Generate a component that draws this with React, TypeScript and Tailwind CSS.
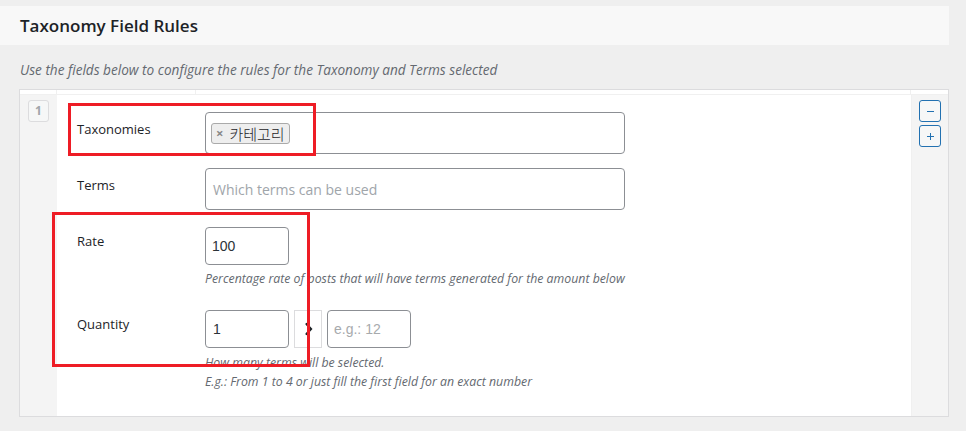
import React from "react";

const font = { fontFamily: '"Open Sans", "Noto Sans CJK KR", sans-serif' };

function Label({ children, pt }: { children: React.ReactNode; pt: string }) {
  return (
    <div className={`w-[128px] shrink-0 ${pt} text-[13px] leading-[18px] text-[#1d2327]`}>
      {children}
    </div>
  );
}

export default function App() {
  return (
    <div
      className="relative w-[966px] h-[431px] bg-[#efefef] overflow-hidden pt-[6px]"
      style={font}
    >
      {/* Header bar */}
      <div className="w-[949px] h-[39px] bg-[#f8f8f8] flex items-center pl-[20px]">
        <h2 className="text-[17px] font-semibold text-[#1d2327] leading-none">
          Taxonomy Field Rules
        </h2>
      </div>

      <p className="ml-[20px] mt-[16px] text-[13.6px] italic text-[#646970] leading-[18px]">
        Use the fields below to configure the rules for the Taxonomy and Terms selected
      </p>

      {/* Table */}
      <div className="ml-[19px] mt-[10px] w-[930px] h-[328px] border border-[#dcdcde] bg-white flex flex-col">
        {/* thin header row */}
        <div className="flex h-[5px] border-b border-[#f0f0f0]">
          <div className="w-[37px] border-r border-[#f0f0f0]" />
          <div className="w-[139px] border-r border-[#f0f0f0]" />
          <div className="flex-1 border-r border-[#f0f0f0]" />
          <div className="w-[37px]" />
        </div>
        <div className="flex flex-1">
          {/* order col */}
          <div className="w-[37px] bg-[#f4f4f4] flex justify-center pt-[5px]">
            <div className="w-[21px] h-[22px] border border-[#dcdcde] rounded-[3px] bg-[#f6f7f7] flex items-center justify-center text-[12px] font-bold text-[#a0a5aa]">
              1
            </div>
          </div>

          {/* main */}
          <div className="flex-1 pl-[20px] pt-[17px] flex flex-col">
            {/* Taxonomies */}
            <div className="flex">
              <Label pt="pt-[8px]">Taxonomies</Label>
              <div className="w-[420px] h-[42px] border border-[#8c8f94] rounded-[4px] flex items-center pl-[5px]">
                <span className="h-[21px] flex items-center gap-[6px] pl-[4px] pr-[4px] border border-[#aaaaaa] rounded-[3px] bg-[#eeeeee] text-[#1d2327]">
                  <span className="text-[#888] text-[13px] font-bold leading-none">×</span>
                  <span
                    className="leading-none text-[15px] font-light"
                    style={{ fontFamily: '"Noto Sans CJK KR", sans-serif' }}
                  >
                    카테고리
                  </span>
                </span>
              </div>
            </div>

            {/* Terms */}
            <div className="flex mt-[14px]">
              <Label pt="pt-[8px]">Terms</Label>
              <div className="w-[420px] h-[42px] border border-[#8c8f94] rounded-[4px] flex items-center pl-[7px] text-[14px] text-[#a0a5aa]">
                Which terms can be used
              </div>
            </div>

            {/* Rate */}
            <div className="flex mt-[17px]">
              <Label pt="pt-[5px]">Rate</Label>
              <div className="flex flex-col">
                <div
                  className="w-[84px] h-[38px] border border-[#8c8f94] rounded-[4px] flex items-center pl-[6px] text-[14px] text-[#2c3338]"
                  style={{ fontFamily: '"Liberation Sans", Arial, sans-serif' }}
                >
                  100
                </div>
                <p className="mt-[5px] text-[12.3px] italic text-[#646970] leading-[18px] whitespace-nowrap">
                  Percentage rate of posts that will have terms generated for the amount below
                </p>
              </div>
            </div>

            {/* Quantity */}
            <div className="flex mt-[22px]">
              <Label pt="pt-[5px]">Quantity</Label>
              <div className="flex flex-col">
                <div className="flex items-center gap-[5px]">
                  <div
                    className="w-[84px] h-[38px] border border-[#8c8f94] rounded-[4px] flex items-center pl-[7px] text-[14px] text-[#2c3338]"
                    style={{ fontFamily: '"Liberation Sans", Arial, sans-serif' }}
                  >
                    1
                  </div>
                  <div className="w-[28px] h-[38px] border border-[#dcdcde] flex items-center justify-center">
                    <svg width="10" height="14" viewBox="0 0 10 14" className="ml-[2px]">
                      <path d="M2.5 2 L7 7 L2.5 12" fill="none" stroke="#1d2327" strokeWidth="2.2" strokeLinecap="round" />
                    </svg>
                  </div>
                  <div
                    className="w-[84px] h-[38px] border border-[#8c8f94] rounded-[4px] flex items-center pl-[6px] text-[14px] text-[#a7aaad]"
                    style={{ fontFamily: '"Liberation Sans", Arial, sans-serif' }}
                  >
                    e.g.: 12
                  </div>
                </div>
                <p className="mt-[5px] text-[12.3px] italic text-[#646970] leading-[19px] whitespace-nowrap">
                  How many terms will be selected.
                  <br />
                  E.g.: From 1 to 4 or just fill the first field for an exact number
                </p>
              </div>
            </div>
          </div>

          {/* action col */}
          <div className="w-[37px] bg-[#f4f4f4] flex flex-col items-center pt-[5px] gap-[3px] border-l border-[#f0f0f0]">
            <div className="w-[22px] h-[22px] border border-[#2271b1] rounded-[3px] bg-[#f6f7f7] flex items-center justify-center">
              <div className="w-[7px] h-[1px] bg-[#2271b1]" />
            </div>
            <div className="w-[22px] h-[22px] border border-[#2271b1] rounded-[3px] bg-[#f6f7f7] flex items-center justify-center relative">
              <div className="w-[7px] h-[1px] bg-[#2271b1]" />
              <div className="absolute w-[1px] h-[7px] bg-[#2271b1]" />
            </div>
          </div>
        </div>
      </div>

      {/* Red annotation boxes */}
      <div className="absolute left-[68px] top-[103px] w-[248px] h-[53px] border-[3px] border-[#ee1c25] pointer-events-none" />
      <div className="absolute left-[52px] top-[212px] w-[258px] h-[155px] border-[3px] border-[#ee1c25] pointer-events-none" />
    </div>
  );
}
